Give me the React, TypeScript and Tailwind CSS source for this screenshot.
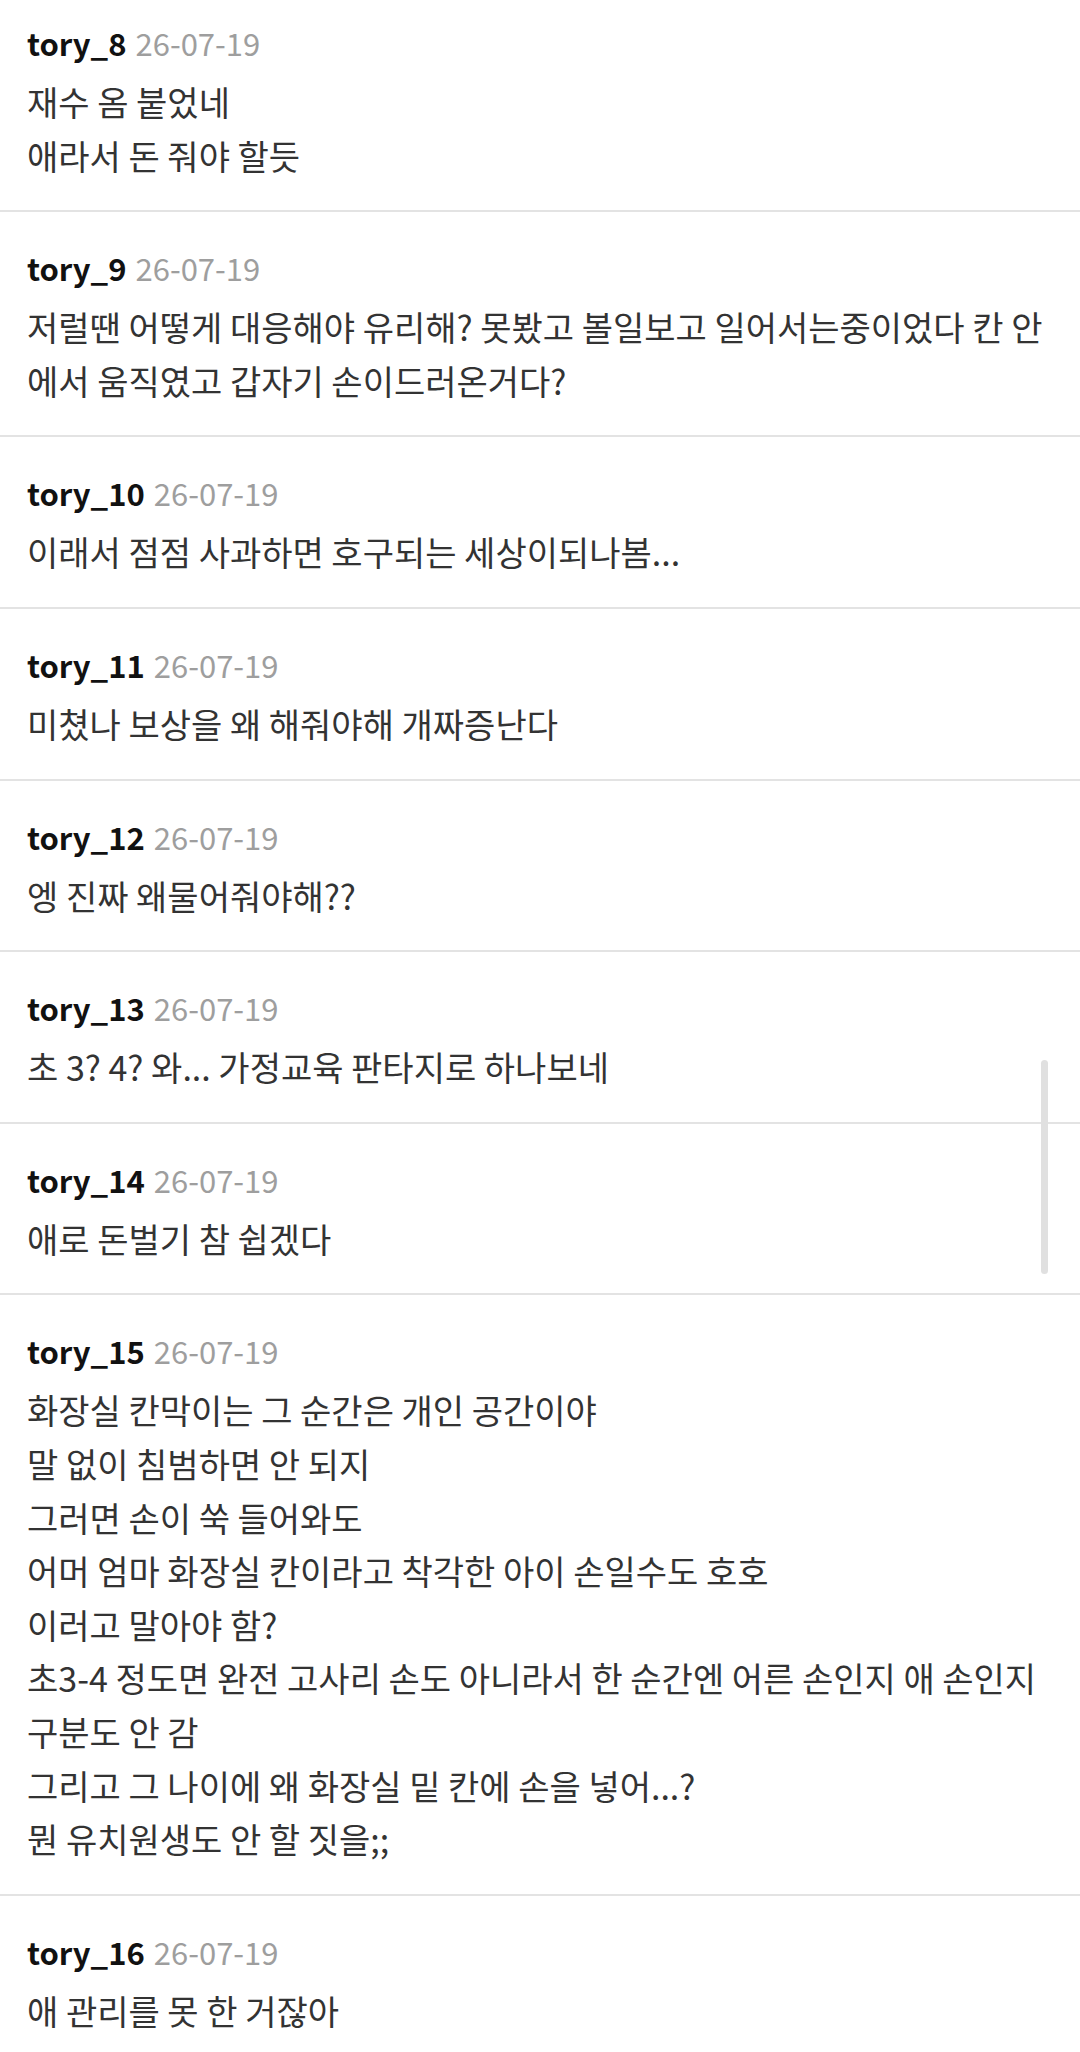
import React from 'react'

type Comment = { user: string; date: string; lines: string[] }

const comments: Comment[] = [
  { user: 'tory_8', date: '26-07-19', lines: ['재수 옴 붙었네', '애라서 돈 줘야 할듯'] },
  {
    user: 'tory_9',
    date: '26-07-19',
    lines: ['저럴땐 어떻게 대응해야 유리해? 못봤고 볼일보고 일어서는중이었다 칸 안', '에서 움직였고 갑자기 손이드러온거다?'],
  },
  { user: 'tory_10', date: '26-07-19', lines: ['이래서 점점 사과하면 호구되는 세상이되나봄...'] },
  { user: 'tory_11', date: '26-07-19', lines: ['미쳤나 보상을 왜 해줘야해 개짜증난다'] },
  { user: 'tory_12', date: '26-07-19', lines: ['엥 진짜 왜물어줘야해??'] },
  { user: 'tory_13', date: '26-07-19', lines: ['초 3? 4? 와... 가정교육 판타지로 하나보네'] },
  { user: 'tory_14', date: '26-07-19', lines: ['애로 돈벌기 참 쉽겠다'] },
  {
    user: 'tory_15',
    date: '26-07-19',
    lines: [
      '화장실 칸막이는 그 순간은 개인 공간이야',
      '말 없이 침범하면 안 되지',
      '그러면 손이 쑥 들어와도',
      '어머 엄마 화장실 칸이라고 착각한 아이 손일수도 호호',
      '이러고 말아야 함?',
      '초3-4 정도면 완전 고사리 손도 아니라서 한 순간엔 어른 손인지 애 손인지',
      '구분도 안 감',
      '그리고 그 나이에 왜 화장실 밑 칸에 손을 넣어...?',
      '뭔 유치원생도 안 할 짓을;;',
    ],
  },
  { user: 'tory_16', date: '26-07-19', lines: ['애 관리를 못 한 거잖아'] },
]

function CommentItem({ c }: { c: Comment }) {
  return (
    <li className="border-b-2 border-[#e3e3e3] pl-[27px] pr-[27px] pt-[29px] pb-[28px]">
      <div className="leading-[54px] text-[31px] whitespace-nowrap">
        <span className="font-semibold text-[#111]">{c.user}</span>
        <span className="ml-[9px] text-[#9e9e9e]">{c.date}</span>
      </div>
      <div className="mt-[5px] text-[34px] leading-[53.6px] text-[#333] whitespace-nowrap">
        {c.lines.map((l, i) => (
          <p key={i}>{l}</p>
        ))}
      </div>
    </li>
  )
}

export default function App() {
  return (
    <div
      className="relative w-[1080px] h-[2052px] overflow-hidden bg-white"
      style={{ fontFamily: '"Noto Sans CJK KR", "Noto Sans", sans-serif' }}
    >
      <ul className="-mt-[13px]">
        {comments.map(c => (
          <CommentItem key={c.user} c={c} />
        ))}
      </ul>
      <div className="absolute left-[1041px] top-[1060px] w-[7px] h-[214px] rounded-full bg-[#e0e0e0]" />
    </div>
  )
}
